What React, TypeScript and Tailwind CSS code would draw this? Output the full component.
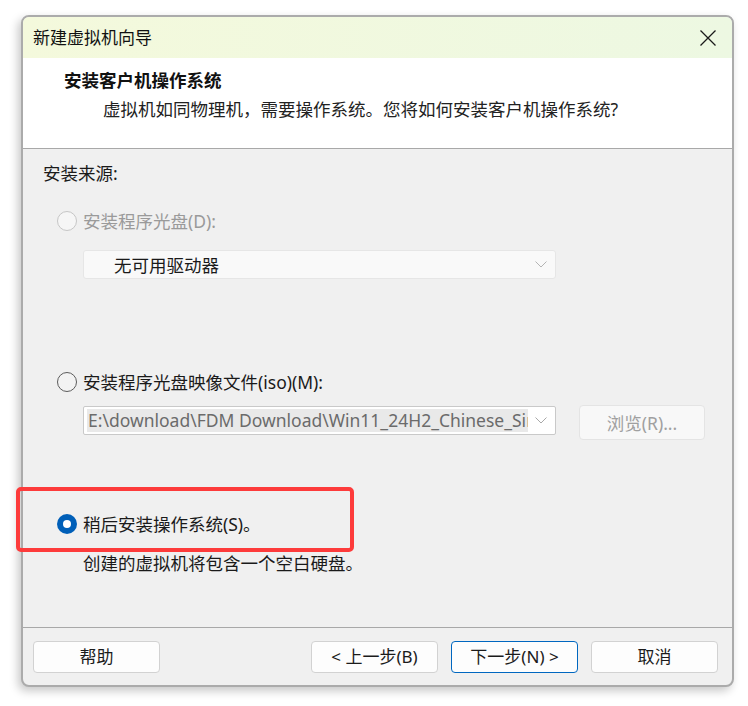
import React from "react";

const FONT = { fontFamily: '"Noto Sans", "Noto Sans CJK SC", sans-serif' };

function Radio({ state }: { state: "disabled" | "off" | "on" }) {
  if (state === "on") {
    return (
      <span className="flex h-[20px] w-[20px] shrink-0 items-center justify-center rounded-full bg-[#005fb8]">
        <span className="h-[8px] w-[8px] rounded-full bg-white" />
      </span>
    );
  }
  return (
    <span
      className={
        state === "disabled"
          ? "h-[20px] w-[20px] shrink-0 rounded-full border border-[#c6c6c6] bg-[#f6f6f6]"
          : "h-[20px] w-[20px] shrink-0 rounded-full border-[1.5px] border-[#5c5c5c] bg-[#f3f3f3]"
      }
    />
  );
}

function Chevron({ color }: { color: string }) {
  return (
    <svg width="12" height="7" viewBox="0 0 12 7" fill="none" className="shrink-0">
      <path d="M0.5 0.5 L6 6 L11.5 0.5" stroke={color} strokeWidth="1" />
    </svg>
  );
}

function Button({ label, primary }: { label: string; primary?: boolean }) {
  return (
    <button
      className={
        "flex h-[32px] w-[127px] items-center justify-center rounded-[4px] border bg-[#fdfdfd] text-[17px] text-[#1b1b1b] " +
        (primary ? "border-[#0067c0]" : "border-[#d2d2d2]")
      }
    >
      {label}
    </button>
  );
}

export default function App() {
  return (
    <div className="relative min-h-[706px] bg-white pl-[21px] pt-[15px]" style={FONT}>
      <div className="flex h-[672px] w-[713px] flex-col overflow-hidden rounded-[8px] border-2 border-[#ababab] bg-[#f0f0f0] shadow-[-3px_4px_10px_rgba(0,0,0,0.22)]">
        {/* title bar */}
        <div className="flex h-[41px] shrink-0 items-center justify-between bg-gradient-to-r from-[#f4f9dc] to-[#edf8e2] pl-[10px] pr-[16px]">
          <span className="text-[17px] text-[#111]">新建虚拟机向导</span>
          <svg width="16" height="16" viewBox="0 0 16 16" fill="none">
            <path d="M0.5 0.5 L15.5 15.5 M15.5 0.5 L0.5 15.5" stroke="#1a1a1a" strokeWidth="1.3" />
          </svg>
        </div>

        {/* header */}
        <div className="flex h-[91px] shrink-0 flex-col border-b border-[#a8a8a8] bg-white pt-[10px]">
          <div className="pl-[41px] text-[17.5px] font-bold leading-[24px] text-[#111]">安装客户机操作系统</div>
          <div className="mt-[5px] pl-[80px] text-[17.5px] leading-[24px] text-[#222]">
            虚拟机如同物理机，需要操作系统。您将如何安装客户机操作系统?
          </div>
        </div>

        {/* body */}
        <div className="flex h-[478px] shrink-0 flex-col pl-[20px] pt-[12px] text-[17.5px] leading-[24px] text-[#1a1a1a]">
          <div>安装来源:</div>

          <div className="mt-[24px] flex items-center gap-[6px] pl-[14px] text-[#9a9a9a]">
            <Radio state="disabled" />
            <span>安装程序光盘(D):</span>
          </div>
          <div className="ml-[40px] mt-[17px] flex h-[29px] w-[473px] items-center justify-between rounded-[3px] border border-[#e6e6e6] bg-[#f9f9f9] pl-[30px] pr-[8px]">
            <span className="text-[#1a1a1a]">无可用驱动器</span>
            <Chevron color="#b4b4b4" />
          </div>

          <div className="mt-[91px] flex items-center gap-[6px] pl-[14px]">
            <Radio state="off" />
            <span>安装程序光盘映像文件(iso)(M):</span>
          </div>
          <div className="ml-[40px] mt-[11px] flex items-start gap-[23px]">
            <div className="mt-[1px] flex h-[29px] w-[473px] items-center rounded-[2px] border border-[#c9c9c9] bg-white pl-[3px] pr-[8px]">
              <span className="h-[23px] w-[441px] overflow-hidden whitespace-nowrap bg-[#e9e9e9] pl-[1px] leading-[23px] text-[#6b6b6b]">
                E:\download\FDM Download\Win11_24H2_Chinese_Sim
              </span>
              <span className="ml-auto">
                <Chevron color="#a8a8a8" />
              </span>
            </div>
            <div className="flex h-[35px] w-[126px] shrink-0 items-center justify-center rounded-[4px] border border-[#e4e4e4] bg-[#f8f8f8] text-[#a0a0a0]">
              浏览(R)...
            </div>
          </div>

          <div className="mt-[72px] flex items-center gap-[6px] pl-[14px]">
            <Radio state="on" />
            <span>稍后安装操作系统(S)。</span>
          </div>
          <div className="ml-[40px] mt-[15px]">创建的虚拟机将包含一个空白硬盘。</div>
        </div>

        {/* footer */}
        <div className="flex flex-1 items-start border-t border-[#a8a8a8] pl-[10px] pt-[13px]">
          <Button label="帮助" />
          <div className="ml-[151px] flex gap-[13px]">
            <Button label="< 上一步(B)" />
            <Button label="下一步(N) >" primary />
            <Button label="取消" />
          </div>
        </div>
      </div>

      {/* red highlight annotation */}
      <div className="absolute left-[16px] top-[487px] h-[65px] w-[338px] rounded-[5px] border-4 border-[#fd3b3b]" />
    </div>
  );
}
